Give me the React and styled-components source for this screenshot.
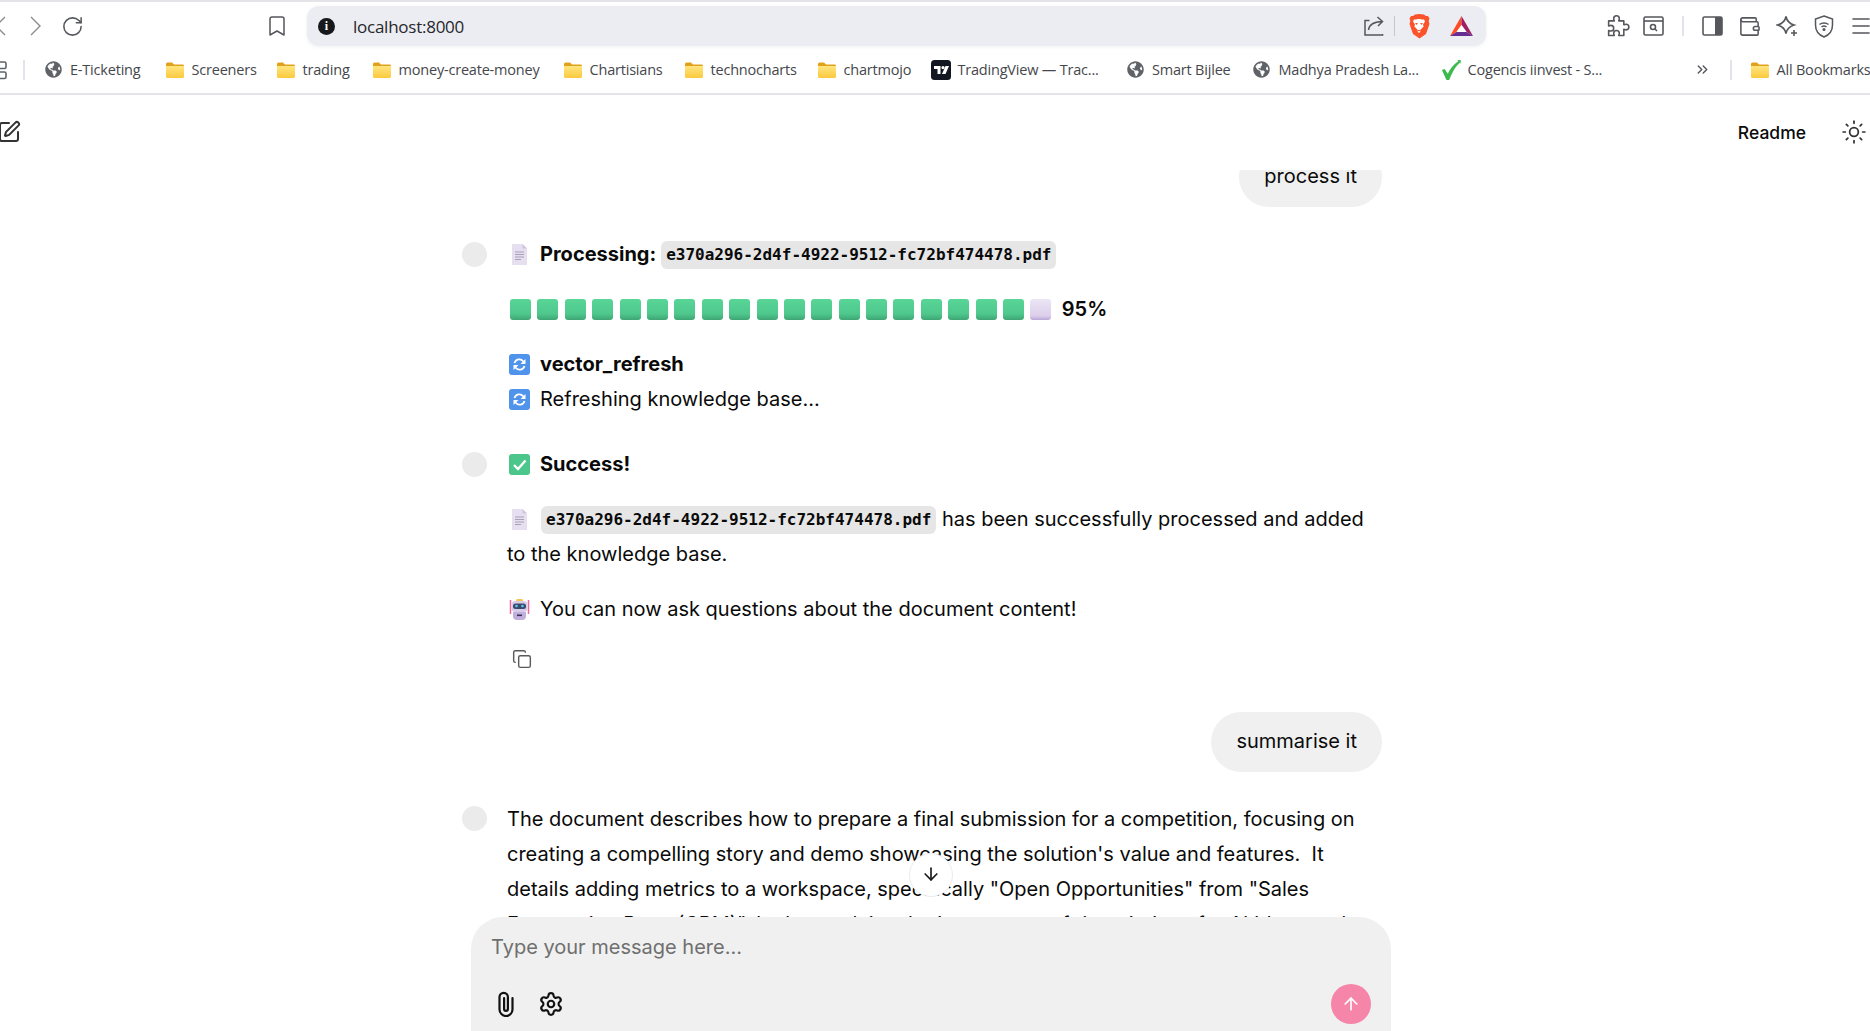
import React from 'react';
import styled, { createGlobalStyle } from 'styled-components';
import {
    ArrowDown, ArrowUp, Bookmark, ChevronsRight, Copy, Menu, RotateCw, Settings, SquarePen, Sun, Wallet,
} from 'lucide-react';
import { FaGlobeAmericas } from 'react-icons/fa';

const GlobalStyle = createGlobalStyle`
    html, body {
        margin: 0;
        height: 100%;
        overflow: hidden;
        background: #fff;
    }
`;

const Page = styled.div`
    height: 100vh;
    display: flex;
    flex-direction: column;
    overflow: hidden;
    font-family: Inter, "Liberation Sans", sans-serif;
    color: #0a0a0a;
`;

/* browser chrome */

const Toolbar = styled.div`
    height: 40px;
    flex: none;
    display: flex;
    align-items: center;
    border-top: 2px solid #e3e3e8;
    padding-top: 4px;
    margin-left: -18px;
    color: #55575c;
`;

const Slot = styled.div`
    width: ${(p) => p.$w || 37}px;
    flex: none;
    display: flex;
    align-items: center;
    justify-content: center;
    margin-left: ${(p) => p.$ml || 0}px;
    color: #55575c;
`;

const AddressPill = styled.div`
    width: 1179px;
    height: 40px;
    flex: none;
    margin-left: 18px;
    display: flex;
    align-items: center;
    background: #ecedf2;
    border-radius: 12px;
    box-shadow: 0 1px 4px rgba(0, 0, 0, 0.06);
    padding: 0 13px 0 11px;
    box-sizing: border-box;
`;

const InfoDot = styled.span`
    width: 17px;
    height: 17px;
    flex: none;
    border-radius: 50%;
    background: #17181c;
    color: #fff;
    font: 700 12px/17px "Liberation Serif", serif;
    text-align: center;
`;

const UrlText = styled.span`
    margin-left: 18px;
    flex: 1;
    font: 400 17px "Open Sans", sans-serif;
    letter-spacing: -0.25px;
    color: #26272b;
`;

const PillDivider = styled.span`
    width: 1px;
    height: 20px;
    background: #c4c6cb;
    margin: 0 13px 0 10px;
`;

const ToolbarDivider = styled.span`
    display: block;
    width: 2px;
    height: 20px;
    background: #e3e4e9;
`;

const BookmarkBar = styled.div`
    height: 47px;
    flex: none;
    display: flex;
    align-items: center;
    border-bottom: 2px solid #e3e3e8;
    white-space: nowrap;
    overflow: hidden;
`;

const BarDivider = styled.span`
    width: 2px;
    height: 20px;
    flex: none;
    background: #e3e4e9;
    margin: 0 ${(p) => p.$right}px 0 ${(p) => p.$left}px;
`;

const BookmarkItem = styled.div`
    width: ${(p) => p.$w}px;
    flex: none;
    display: flex;
    align-items: center;
    gap: 7px;
`;

const BookmarkIcon = styled.span`
    width: 20px;
    height: 20px;
    flex: none;
    display: flex;
    align-items: center;
    justify-content: center;
    color: #5f6368;
`;

const BookmarkLabel = styled.span`
    font: 400 14.5px "Open Sans", sans-serif;
    letter-spacing: -0.2px;
    color: #45474c;
`;

/* app header */

const AppHeader = styled.header`
    height: 75px;
    flex: none;
    box-sizing: border-box;
    padding: 0 3px 1px 0;
    display: flex;
    align-items: center;
    background: #fff;
    margin-left: -3px;
`;

const ReadmeLink = styled.span`
    margin-left: auto;
    font-size: 17.5px;
    font-weight: 500;
`;

const ThemeButton = styled.span`
    display: flex;
    margin: 0 0 0 35px;
    color: #333;
`;

/* chat */

const ChatArea = styled.main`
    flex: 1;
    min-height: 0;
    position: relative;
    overflow: hidden;
`;

const ChatColumn = styled.div`
    width: 920px;
    margin-left: 462px;
    margin-top: -23px;
    font-size: 20px;
    line-height: 35px;
`;

const UserBubble = styled.div`
    width: fit-content;
    margin: ${(p) => p.$top || 0}px 0 0 auto;
    padding: 11.5px 25px 13.5px;
    background: #f0f0f0;
    border-radius: 30px;
`;

const AssistantRow = styled.div`
    display: flex;
    margin-top: ${(p) => p.$top}px;
`;

const Avatar = styled.span`
    width: 25px;
    height: 25px;
    flex: none;
    margin-top: ${(p) => p.$top || 5}px;
    border-radius: 50%;
    background: #ebebeb;
`;

const MessageBody = styled.div`
    margin-left: 20px;
    flex: 1;
    min-width: 0;
`;

const Para = styled.div`
    margin: 0 0 20px;
    &:last-child {
        margin-bottom: 0;
    }
`;

const Line = styled.span`
    display: flex;
    align-items: center;
    font-weight: ${(p) => (p.$bold ? 700 : 400)};
`;

const Emoji = styled.svg`
    width: 21px;
    height: 21px;
    flex: none;
    display: inline-block;
    vertical-align: -4px;
    margin: 0 10px 0 2px;
`;

const CodeChip = styled.code`
    display: inline-block;
    height: 28px;
    box-sizing: border-box;
    margin-left: ${(p) => p.$ml || 0}px;
    padding: 0 5px;
    background: #e6e6e6;
    border-radius: 6px;
    font: 700 16px/28px "DejaVu Sans Mono", monospace;
    vertical-align: 1px;
`;

const ProgressRow = styled.div`
    display: flex;
    align-items: center;
    height: 35px;
    padding-left: 3px;
`;

const Block = styled.span`
    width: 21px;
    height: 21px;
    flex: none;
    margin-right: 6.4px;
    border-radius: 3px;
    background: ${(p) => (p.$empty
        ? 'linear-gradient(180deg, #ece6f5 0%, #dccfeb 80%, #b9a5d6 100%)'
        : 'linear-gradient(180deg, #58d597 0%, #4fc88d 70%, #3ea573 100%)')};
`;

const Percent = styled.span`
    margin-left: 4px;
    font-weight: 600;
`;

const CopyRow = styled.div`
    display: flex;
    height: 20px;
    margin: 22px 0 0 5px;
    color: #5a5a5a;
`;

const ScrollDown = styled.button`
    position: absolute;
    left: 909px;
    top: 683px;
    width: 44px;
    height: 44px;
    padding: 0 0 2px;
    display: flex;
    align-items: center;
    justify-content: center;
    background: #fff;
    border: 1px solid #ececec;
    border-radius: 50%;
    color: #1a1a1a;
`;

const ComposerDock = styled.div`
    position: absolute;
    left: 471px;
    bottom: 0;
    width: 920px;
    height: 114px;
    overflow: hidden;
`;

const Composer = styled.div`
    height: 146px;
    box-sizing: border-box;
    padding: 13px 21px 0 20px;
    display: flex;
    flex-direction: column;
    background: #f0f0f0;
    border-radius: 32px;
`;

const Placeholder = styled.div`
    font-size: 20px;
    line-height: 35px;
    color: #6f6f6f;
`;

const ComposerTools = styled.div`
    margin: 19px 0 0 2px;
    display: flex;
    align-items: center;
    gap: 19px;
    color: #111;
`;

const SendButton = styled.span`
    margin-left: auto;
    margin-right: -1px;
    width: 40px;
    height: 40px;
    display: flex;
    align-items: center;
    justify-content: center;
    border-radius: 50%;
    background: #f585a9;
    color: #fff;
`;

/* drawings */

const Chevron = ({ flip }) => (
    <svg width="12" height="20" viewBox="0 0 12 20" fill="none" stroke="#8b8c90" strokeWidth="1.4">
        <path d={flip ? 'M11 1 2 10l9 9' : 'M1 1l9 9-9 9'} />
    </svg>
);

const ShareIcon = () => (
    <svg width="20" height="20" viewBox="0 0 20 20" fill="none" stroke="currentColor" strokeWidth="1.5">
        <path d="M5.5 4.500H1v14.600h17.600v-1" />
        <path d="M4.500 14c.6-5 4-8.200 13.500-8.500M13.500 1l5 4.500-4.500 4.500" />
    </svg>
);

const BraveIcon = () => (
    <svg width="22" height="25" viewBox="0 0 22 25">
        <path fill="#fb542b" d="M11 0l5 .5 2 1.500 2 0 1.500 2.500-.8 2.500.8 3-3.500 10-6.500 4.500-6.500-4.500-3.500-10 .8-3-.8-2.500 1.500-2.500 2 0 2-1.500z" />
        <path fill="#fff" d="M11 5c1.500 0 3 .8 5 .5l1 2-2 3 .6 2-3 3-.6 3h-2l-.6-3-3-3 .6-2-2-3 1-2c2 .3 3.500-.5 5-.5z" />
        <path fill="#fb542b" d="M7 9h3l-1.500 2zM12 9h3l-1.500 2zM9 16h4l-2 1.500z" />
    </svg>
);

const BatIcon = () => (
    <svg width="23" height="20" viewBox="0 0 23 20">
        <path fill="#ff4a24" d="M11.500 0 0 20l6.500-4 5-7z" />
        <path fill="#9e1f63" d="M11.500 0 23 20l-6.500-4-5-7z" />
        <path fill="#662d91" d="M0 20h23l-6.500-4h-10z" />
        <path fill="#fff" d="M11.500 9l5 7h-10z" />
    </svg>
);

const PuzzleIcon = () => (
    <svg width="27" height="27" viewBox="0 0 24 24" fill="none" stroke="currentColor" strokeWidth="1.4" strokeLinejoin="round">
        <path d="M9.500 5a2.500 2.500 0 0 1 5 0c0 .8-.4 1.300-.5 2h4.500v3.500c.7-.1 1.200-.5 2-.5a2.500 2.500 0 0 1 0 5c-.8 0-1.300-.4-2-.5V20h-4.500c.1-.7.5-1.200.5-2a2.500 2.500 0 0 0-5 0c0 .8.4 1.300.5 2H5v-4.500c.7.1 1.200.5 2 .5a2.500 2.500 0 0 0 0-5c-.8 0-1.300.4-2 .5V7h5c-.1-.7-.5-1.200-.5-2z" />
    </svg>
);

const SearchWindowIcon = () => (
    <svg width="21" height="20" viewBox="0 0 21 20" fill="none" stroke="currentColor" strokeWidth="1.6">
        <rect x="1" y="1" width="19" height="18" rx="1.500" />
        <path d="M1 5h19" />
        <circle cx="10" cy="11" r="2.500" />
        <path d="M12 13l2 2" />
    </svg>
);

const SidePanelIcon = () => (
    <svg width="21" height="20" viewBox="0 0 21 20">
        <rect x="1" y="1" width="19" height="18" rx="1.500" fill="none" stroke="currentColor" strokeWidth="1.6" />
        <path fill="currentColor" d="M13 1h5.500A1.500 1.500 0 0 1 20 2.500v15a1.500 1.500 0 0 1-1.500 1.500H13z" />
    </svg>
);

const SparkIcon = () => (
    <svg width="22" height="22" viewBox="0 0 22 22" fill="none" stroke="currentColor" strokeWidth="1.6">
        <path d="M10 1.500c.8 4.500 3 7 8 8.500-5 1.500-7.200 4-8 8.500-.8-4.500-3-7-8.500-8.500 5.500-1.500 7.700-4 8.500-8.500z" />
        <path d="M18 15v6M15 18h6" />
    </svg>
);

const ShieldWifiIcon = () => (
    <svg width="20" height="23" viewBox="0 0 20 23" fill="none" stroke="currentColor" strokeWidth="1.5">
        <path d="M10 1l8.500 3v6c0 6-3.500 10-8.500 12C5 20 1.500 16 1.500 10V4z" />
        <path d="M5.500 9.500c2.500-2 6.500-2 9 0M7.500 12c1.300-1 3.700-1 5 0" />
        <circle cx="10" cy="14.500" r=".8" fill="currentColor" />
    </svg>
);

const FolderIcon = () => (
    <svg width="20" height="18" viewBox="0 0 20 18">
        <defs>
            <linearGradient id="folderFill" x1="0" y1="0" x2="0" y2="1">
                <stop offset="0" stopColor="#ffe57f" />
                <stop offset="1" stopColor="#fbc93d" />
            </linearGradient>
        </defs>
        <path fill="#e0a21a" d="M1 3a1.500 1.500 0 0 1 1.500-1.500h4.500l2 2h8A1.500 1.500 0 0 1 19 5v10H1z" />
        <path fill="url(#folderFill)" d="M1 5h18v10.500a1.500 1.500 0 0 1-1.500 1.500h-15A1.500 1.500 0 0 1 1 15.500z" />
    </svg>
);

const TradingViewIcon = () => (
    <svg width="20" height="20" viewBox="0 0 20 20">
        <rect width="20" height="20" rx="3.500" fill="#131722" />
        <path fill="#fff" d="M3 6h6.500v8H6.500V9H3z" />
        <circle cx="12" cy="7.600" r="1.600" fill="#fff" />
        <path fill="#fff" d="M14.500 6H18l-3.500 8H11z" />
    </svg>
);

const CheckLogo = () => (
    <svg width="22" height="22" viewBox="0 0 22 22">
        <path fill="#3dba4e" d="M1 11l3-1 3.500 5C10 9.500 14 5 19 1.500l-1-1.500 4 .2-.7 4-1-1C16 7 12.500 13 9 22H6z" />
    </svg>
);

const GridStub = () => (
    <svg width="8" height="20" viewBox="0 0 8 20" fill="none" stroke="#5f6368" strokeWidth="1.6">
        <rect x="-6" y="2" width="12" height="6.500" rx="1.500" />
        <rect x="-6" y="12" width="12" height="6.500" rx="1.500" />
    </svg>
);

const ClipIcon = () => (
    <svg width="26" height="26" viewBox="0 0 26 26" fill="none" stroke="currentColor" strokeWidth="2.2" strokeLinecap="round">
        <path d="M19.500 7v11.500a6.500 6.500 0 0 1-13 0V6a4.200 4.200 0 0 1 8.400 0v12a1.900 1.900 0 0 1-3.800 0V7" />
    </svg>
);

const DocGlyph = () => (
    <Emoji viewBox="0 0 21 21">
        <path fill="#e6dff0" d="M3 0h10.500L18 4.500V21H3z" />
        <path fill="#cfc4e0" d="M13.500 0 18 4.500h-4.500z" />
        <path stroke="#a99fb8" strokeWidth="1" d="M6 8h9M6 10.500h9M6 13h9M6 15.500h6" />
    </Emoji>
);

const RefreshGlyph = () => (
    <Emoji viewBox="0 0 21 21">
        <rect width="21" height="21" rx="3" fill="#4f94ea" />
        <g fill="none" stroke="#fff" strokeWidth="1.800">
            <path d="M5.500 9a5 5 0 0 1 8.700-1.800L15.500 9" />
            <path d="M15.500 12a5 5 0 0 1-8.700 1.800L5.500 12" />
        </g>
        <path fill="#fff" d="M16.500 5v5h-5zM4.500 16v-5h5z" />
    </Emoji>
);

const CheckGlyph = () => (
    <Emoji viewBox="0 0 21 21">
        <rect width="21" height="21" rx="3" fill="#4cc68a" />
        <path fill="none" stroke="#fff" strokeWidth="2.400" d="M5 11l4 4 7.500-8.500" />
    </Emoji>
);

const RobotGlyph = () => (
    <Emoji viewBox="0 0 21 21">
        <path stroke="#f0679a" strokeWidth="1.500" d="M1.500 1v14M19.500 1v14" />
        <rect x="7" y="0" width="7" height="3" rx="1.500" fill="#f5c451" />
        <rect x="2.500" y="2" width="16" height="11" rx="4" fill="#d8cbea" />
        <rect x="4" y="4.500" width="13" height="5.500" rx="2.500" fill="#3a4a6b" />
        <circle cx="7.500" cy="7" r="1.300" fill="#5bc8f5" />
        <circle cx="13.500" cy="7" r="1.300" fill="#5bc8f5" />
        <path fill="#c2aedd" d="M4 13h13v4a4 4 0 0 1-4 4H8a4 4 0 0 1-4-4z" />
        <rect x="8" y="15.500" width="5" height="1.600" fill="#3a3350" />
    </Emoji>
);

const BOOKMARKS = [
    { label: 'E-Ticketing', w: 121.5, icon: <FaGlobeAmericas size={17} /> },
    { label: 'Screeners', w: 111, icon: <FolderIcon /> },
    { label: 'trading', w: 96, icon: <FolderIcon /> },
    { label: 'money-create-money', w: 191, icon: <FolderIcon /> },
    { label: 'Chartisians', w: 121, icon: <FolderIcon /> },
    { label: 'technocharts', w: 133, icon: <FolderIcon /> },
    { label: 'chartmojo', w: 114, icon: <FolderIcon /> },
    { label: 'TradingView — Trac...', w: 194.5, icon: <TradingViewIcon /> },
    { label: 'Smart Bijlee', w: 126.5, icon: <FaGlobeAmericas size={17} /> },
    { label: 'Madhya Pradesh La...', w: 189, icon: <FaGlobeAmericas size={17} /> },
    { label: 'Cogencis iinvest - S...', w: 251, icon: <CheckLogo /> },
];

const FILE_NAME = 'e370a296-2d4f-4922-9512-fc72bf474478.pdf';

const App = () => {
    return (
        <Page>
            <GlobalStyle />

            <Toolbar>
                <Slot $w={36}><Chevron flip /></Slot>
                <Slot $w={36}><Chevron /></Slot>
                <Slot $w={37}><RotateCw size={23} strokeWidth={1.6} /></Slot>
                <Slot $w={24} $ml={174}><Bookmark size={24} strokeWidth={1.5} /></Slot>
                <AddressPill>
                    <InfoDot>i</InfoDot>
                    <UrlText>localhost:8000</UrlText>
                    <ShareIcon />
                    <PillDivider />
                    <BraveIcon />
                    <Slot $w={23} $ml={20}><BatIcon /></Slot>
                </AddressPill>
                <Slot $ml={112}><PuzzleIcon /></Slot>
                <Slot><SearchWindowIcon /></Slot>
                <Slot $w={22}><ToolbarDivider /></Slot>
                <Slot><SidePanelIcon /></Slot>
                <Slot><Wallet size={23} strokeWidth={1.6} /></Slot>
                <Slot><SparkIcon /></Slot>
                <Slot><ShieldWifiIcon /></Slot>
                <Slot><Menu size={24} strokeWidth={1.6} /></Slot>
            </Toolbar>

            <BookmarkBar>
                <Slot $w={8}><GridStub /></Slot>
                <BarDivider $left={15} $right={18} />
                {BOOKMARKS.map((item) => (
                    <BookmarkItem key={item.label} $w={item.w}>
                        <BookmarkIcon>{item.icon}</BookmarkIcon>
                        <BookmarkLabel>{item.label}</BookmarkLabel>
                    </BookmarkItem>
                ))}
                <Slot $w={22}><ChevronsRight size={17} /></Slot>
                <BarDivider $left={16} $right={18} />
                <BookmarkItem $w={140}>
                    <BookmarkIcon><FolderIcon /></BookmarkIcon>
                    <BookmarkLabel>All Bookmarks</BookmarkLabel>
                </BookmarkItem>
            </BookmarkBar>

            <AppHeader>
                <SquarePen size={24} strokeWidth={2} color="#333" />
                <ReadmeLink>Readme</ReadmeLink>
                <ThemeButton><Sun size={26} strokeWidth={1.6} /></ThemeButton>
            </AppHeader>

            <ChatArea>
                <ChatColumn>
                    <UserBubble>process it</UserBubble>

                    <AssistantRow $top={30}>
                        <Avatar />
                        <MessageBody>
                            <Para>
                                <Line $bold>
                                    <DocGlyph />Processing:
                                    <CodeChip $ml={5}>{FILE_NAME}</CodeChip>
                                </Line>
                            </Para>
                            <Para>
                                <ProgressRow>
                                    {Array.from({ length: 19 }).map((_, i) => <Block key={i} />)}
                                    <Block $empty />
                                    <Percent>95%</Percent>
                                </ProgressRow>
                            </Para>
                            <Para>
                                <Line $bold><RefreshGlyph />vector_refresh</Line>
                                <Line><RefreshGlyph />Refreshing knowledge base...</Line>
                            </Para>
                        </MessageBody>
                    </AssistantRow>

                    <AssistantRow $top={30}>
                        <Avatar />
                        <MessageBody>
                            <Para>
                                <Line $bold><CheckGlyph />Success!</Line>
                            </Para>
                            <Para>
                                <DocGlyph />
                                <CodeChip $ml={1}>{FILE_NAME}</CodeChip> has been successfully processed and added
                                to the knowledge base.
                            </Para>
                            <Para>
                                <Line><RobotGlyph />You can now ask questions about the document content!</Line>
                            </Para>
                            <CopyRow><Copy size={20} strokeWidth={1.7} /></CopyRow>
                        </MessageBody>
                    </AssistantRow>

                    <UserBubble $top={43}>summarise it</UserBubble>

                    <AssistantRow $top={30}>
                        <Avatar $top={4} />
                        <MessageBody>
                            <Para>
                                The document describes how to prepare a final submission for a competition, focusing on
                                creating a compelling story and demo showcasing the solution's value and features.&nbsp; It
                                details adding metrics to a workspace, specifically "Open Opportunities" from "Sales
                                Forecasting Page (CRM)". It also explains the importance of descriptions for AI Ideas and how
                            </Para>
                        </MessageBody>
                    </AssistantRow>
                </ChatColumn>

                <ScrollDown aria-label="Scroll to bottom"><ArrowDown size={20} strokeWidth={2} /></ScrollDown>

                <ComposerDock>
                    <Composer>
                        <Placeholder>Type your message here...</Placeholder>
                        <ComposerTools>
                            <ClipIcon />
                            <Settings size={26} strokeWidth={2} />
                            <SendButton><ArrowUp size={20} strokeWidth={2} /></SendButton>
                        </ComposerTools>
                    </Composer>
                </ComposerDock>
            </ChatArea>
        </Page>
    );
};

export default App;
